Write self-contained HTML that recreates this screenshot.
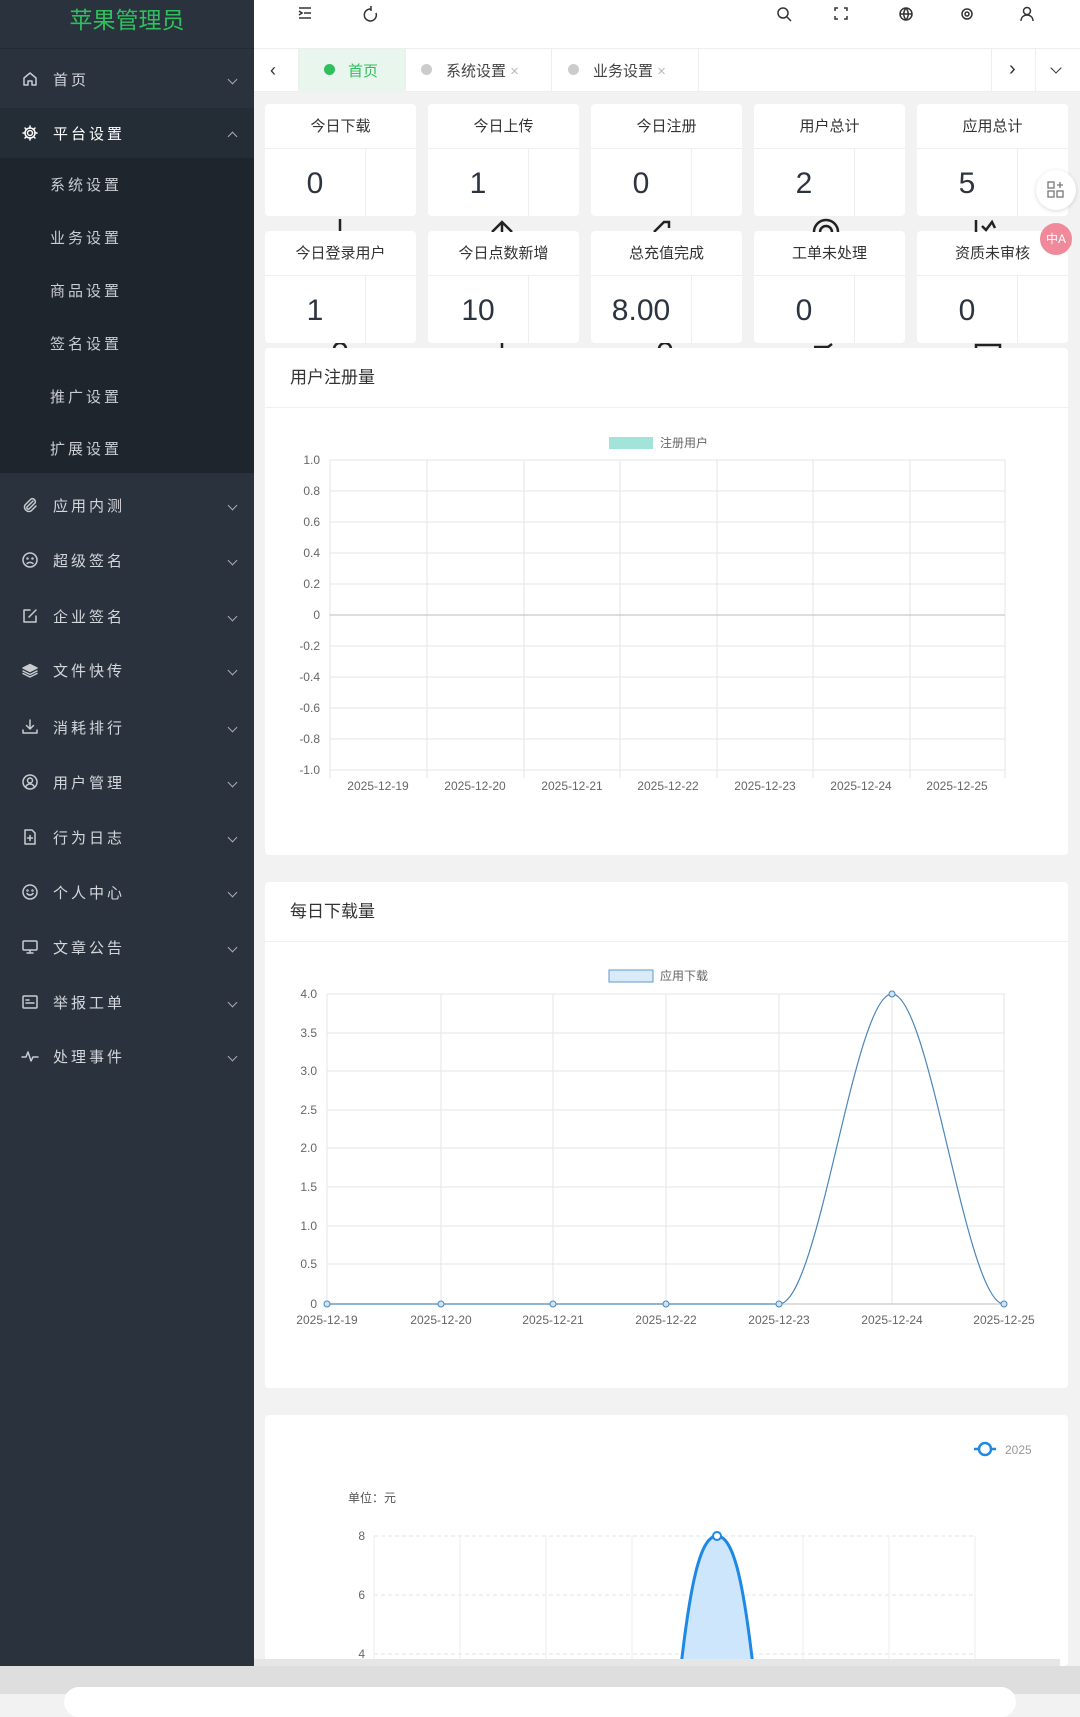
<!DOCTYPE html>
<html><head><meta charset="utf-8"><style>
*{margin:0;padding:0;box-sizing:border-box}
body{width:1080px;height:1694px;overflow:hidden;background:#f2f2f2;font-family:"Liberation Sans","Noto Sans CJK SC",sans-serif;position:relative}
.a{position:absolute}
#side{left:0;top:0;width:254px;height:1666px;background:#29323d}
.mi{position:absolute;left:0;width:254px;height:50px;color:#d4d7db;font-size:15px;letter-spacing:3px;display:flex;align-items:center}
.mi svg{position:absolute;left:21px;top:16px;width:18px;height:18px;fill:none;stroke:#c8ccd0;stroke-width:1.5;stroke-linecap:round;stroke-linejoin:round}
.mi span{position:absolute;left:53px}
.mi .ch{position:absolute;left:229px;width:7px;height:7px;border-right:1.3px solid #aab;border-bottom:1.3px solid #aab;transform:rotate(45deg)}
.sub{position:absolute;left:50px;color:#c9ccd0;font-size:15px;letter-spacing:3px}
.card{position:absolute;background:#fff;width:151px;height:112px;border-radius:4px}
.card .t{height:45px;border-bottom:1px solid #eee;text-align:center;line-height:45px;font-size:15px;color:#333}
.card .n{position:absolute;top:45px;left:0;width:101px;height:67px;border-right:1px solid #eee;text-align:center;line-height:70px;font-size:30px;color:#2c3440;font-weight:300}
.panel{position:absolute;left:265px;width:803px;background:#fff;border-radius:4px}
.panel .h{height:60px;border-bottom:1px solid #f0f0f0;padding-left:25px;line-height:60px;font-size:17px;color:#333}
.ax{font-size:12px;fill:#666;font-family:"Liberation Sans",sans-serif}
</style></head><body>
<div id="side" class="a">
 <div class="a" style="left:0;top:0;width:254px;height:49px;background:#29323d;border-bottom:1px solid #222a33;text-align:center;color:#2fbf5d;font-size:23px;line-height:40px">苹果管理员</div>
 <div class="mi" style="top:54px"><svg viewBox="0 0 18 18"><path d="M3 8l6-5 6 5v7H11v-4H7v4H3z"/></svg><span>首页</span><i class="ch"></i></div>
 <div class="a" style="top:108px;left:0;width:254px;height:50px;background:#242c36"></div>
 <div class="mi" style="top:108px;color:#fff"><svg viewBox="0 0 18 18" style="stroke:#fff"><circle cx="9" cy="9" r="2.5"/><path d="M9 2v2M9 14v2M2 9h2M14 9h2M4 4l1.5 1.5M12.5 12.5L14 14M4 14l1.5-1.5M12.5 5.5L14 4"/><circle cx="9" cy="9" r="5"/></svg><span>平台设置</span><i class="ch" style="transform:rotate(225deg);top:25px"></i></div>
 <div class="a" style="top:158px;left:0;width:254px;height:315px;background:#1e252d"></div>
 <div class="sub" style="top:174px">系统设置</div>
 <div class="sub" style="top:227px">业务设置</div>
 <div class="sub" style="top:280px">商品设置</div>
 <div class="sub" style="top:333px">签名设置</div>
 <div class="sub" style="top:386px">推广设置</div>
 <div class="sub" style="top:438px">扩展设置</div>
 <div class="mi" style="top:480px"><svg viewBox="0 0 18 18"><path d="M12 5l-6 6a1.5 1.5 0 0 0 2 2l6-6a3 3 0 0 0-4-4l-6 6a4.5 4.5 0 0 0 6 6l5-5"/></svg><span>应用内测</span><i class="ch"></i></div>
 <div class="mi" style="top:535px"><svg viewBox="0 0 18 18"><circle cx="9" cy="9" r="7"/><path d="M6 12.5c1.5-1.5 4.5-1.5 6 0"/><circle cx="6.5" cy="7.5" r=".5"/><circle cx="11.5" cy="7.5" r=".5"/></svg><span>超级签名</span><i class="ch"></i></div>
 <div class="mi" style="top:591px"><svg viewBox="0 0 18 18"><path d="M9 3H3v12h12V9"/><path d="M8 10l7-7"/></svg><span>企业签名</span><i class="ch"></i></div>
 <div class="mi" style="top:645px"><svg viewBox="0 0 18 18"><path d="M2 7l7-3.5L16 7l-7 3.5z" fill="#c8ccd0"/><path d="M2 10l7 3.5 7-3.5M2 12.5l7 3.5 7-3.5"/></svg><span>文件快传</span><i class="ch"></i></div>
 <div class="mi" style="top:702px"><svg viewBox="0 0 18 18"><path d="M9 2v9M5.5 7.5L9 11l3.5-3.5M2 12v3h14v-3"/></svg><span>消耗排行</span><i class="ch"></i></div>
 <div class="mi" style="top:757px"><svg viewBox="0 0 18 18"><circle cx="9" cy="9" r="7"/><circle cx="9" cy="7.5" r="2.5"/><path d="M4.5 14c1-2 2.5-3 4.5-3s3.5 1 4.5 3"/></svg><span>用户管理</span><i class="ch"></i></div>
 <div class="mi" style="top:812px"><svg viewBox="0 0 18 18"><path d="M4 2h7l3 3v11H4z"/><path d="M9 7.5v5M6.5 10h5"/></svg><span>行为日志</span><i class="ch"></i></div>
 <div class="mi" style="top:867px"><svg viewBox="0 0 18 18"><circle cx="9" cy="9" r="7"/><path d="M6 10.5c1.5 2 4.5 2 6 0"/><circle cx="6.5" cy="7.5" r=".5"/><circle cx="11.5" cy="7.5" r=".5"/></svg><span>个人中心</span><i class="ch"></i></div>
 <div class="mi" style="top:922px"><svg viewBox="0 0 18 18"><rect x="2" y="3" width="14" height="9" rx="1"/><path d="M9 12v3M6 15h6"/></svg><span>文章公告</span><i class="ch"></i></div>
 <div class="mi" style="top:977px"><svg viewBox="0 0 18 18"><rect x="2" y="3" width="14" height="12" rx="1"/><path d="M5 7h3M5 10h8"/></svg><span>举报工单</span><i class="ch"></i></div>
 <div class="mi" style="top:1031px"><svg viewBox="0 0 18 18"><path d="M1 10h4l2-5 3 9 2-4h5"/></svg><span>处理事件</span><i class="ch"></i></div>
</div>
<!-- header -->
<div class="a" style="left:254px;top:0;width:826px;height:49px;background:#fff;border-bottom:1px solid #eee"></div>
<svg class="a" style="left:254px;top:0" width="826" height="49" fill="none" stroke="#333" stroke-width="1.5">
 <path d="M45 8h12M50 13h7M45 18h12M45 11l3 2-3 2"/>
 <path d="M117 9a6 6 0 1 0 5 4M117 6v5"/>
 <circle cx="529" cy="13" r="5"/><path d="M533 17l4 4"/>
 <path d="M584 8h-3v3M590 8h3v3M584 19h-3v-3M590 19h3v-3"/>
 <circle cx="652" cy="14" r="6"/><path d="M646 14h12M652 8c-3 4-3 8 0 12M652 8c3 4 3 8 0 12"/>
 <circle cx="713" cy="14" r="5"/><circle cx="713" cy="14" r="2"/>
 <circle cx="773" cy="11" r="3.5"/><path d="M767 21c0-4 3-6 6-6s6 2 6 6"/>
</svg>
<!-- tabs -->
<div class="a" style="left:254px;top:49px;width:826px;height:43px;background:#fff;border-bottom:1px solid #eee"></div>
<div class="a" style="left:270px;top:60px;font-size:18px;color:#333">‹</div>
<div class="a" style="left:298px;top:49px;width:107px;height:43px;background:#e9f6ee;border-left:1px solid #eee"></div>
<div class="a" style="left:324px;top:64px;width:11px;height:11px;border-radius:50%;background:#2fbf5d"></div>
<div class="a" style="left:348px;top:60px;font-size:15px;color:#2fbf5d">首页</div>
<div class="a" style="left:405px;top:49px;width:147px;height:43px;border-left:1px solid #eee;border-right:1px solid #eee"></div>
<div class="a" style="left:421px;top:64px;width:11px;height:11px;border-radius:50%;background:#ccc"></div>
<div class="a" style="left:446px;top:60px;font-size:15px;color:#444">系统设置 <span style="color:#bbb">×</span></div>
<div class="a" style="left:552px;top:49px;width:147px;height:43px;border-right:1px solid #eee"></div>
<div class="a" style="left:568px;top:64px;width:11px;height:11px;border-radius:50%;background:#ccc"></div>
<div class="a" style="left:593px;top:60px;font-size:15px;color:#444">业务设置 <span style="color:#bbb">×</span></div>
<div class="a" style="left:991px;top:49px;width:1px;height:43px;background:#eee"></div>
<div class="a" style="left:1035px;top:49px;width:1px;height:43px;background:#eee"></div>
<div class="a" style="left:1009px;top:58px;font-size:20px;color:#333">›</div>
<div class="a" style="left:1052px;top:64px;width:8px;height:8px;border-right:1.3px solid #333;border-bottom:1.3px solid #333;transform:rotate(45deg)"></div>
<!-- cards -->
<div class="card" style="left:265px;top:104px"><div class="t">今日下载</div><div class="n">0</div></div>
<div class="card" style="left:428px;top:104px"><div class="t">今日上传</div><div class="n">1</div></div>
<div class="card" style="left:591px;top:104px"><div class="t">今日注册</div><div class="n">0</div></div>
<div class="card" style="left:754px;top:104px"><div class="t">用户总计</div><div class="n">2</div></div>
<div class="card" style="left:917px;top:104px"><div class="t">应用总计</div><div class="n">5</div></div>
<div class="card" style="left:265px;top:231px"><div class="t">今日登录用户</div><div class="n">1</div></div>
<div class="card" style="left:428px;top:231px"><div class="t">今日点数新增</div><div class="n">10</div></div>
<div class="card" style="left:591px;top:231px"><div class="t">总充值完成</div><div class="n">8.00</div></div>
<div class="card" style="left:754px;top:231px"><div class="t">工单未处理</div><div class="n">0</div></div>
<div class="card" style="left:917px;top:231px"><div class="t">资质未审核</div><div class="n">0</div></div>
<svg class="a" style="left:254px;top:216px" width="826" height="16" fill="none" stroke="#222" stroke-width="2.5">
 <path d="M86 3v12"/><path d="M238 16l10-10 10 10M248 6v10"/><path d="M400 16l10-10h5v6"/><path d="M560 16a12 12 0 0 1 24 0M566 16a6 6 0 0 1 12 0"/><path d="M722 4v12M728 10l4 4 6-8 3 6"/>
</svg>
<svg class="a" style="left:254px;top:343px" width="826" height="6" fill="none" stroke="#222" stroke-width="2.5">
 <path d="M80 6a6 6 0 0 1 12 0"/><path d="M248 0v6"/><path d="M405 6a6 6 0 0 1 12 0"/><path d="M560 4h14l4-3"/><path d="M722 5v-3h24v3"/>
</svg>
<!-- floating buttons -->
<div class="a" style="left:1036px;top:170px;width:40px;height:40px;border-radius:50%;background:#fff;box-shadow:0 1px 4px rgba(0,0,0,.15)"></div>
<svg class="a" style="left:1047px;top:181px" width="18" height="18" fill="none" stroke="#777" stroke-width="1.3"><rect x="1" y="1" width="6" height="6"/><rect x="1" y="10" width="6" height="6"/><rect x="10" y="10" width="6" height="6"/><path d="M13 1v6M10 4h6"/></svg>
<div class="a" style="left:1040px;top:223px;width:32px;height:32px;border-radius:50%;background:#f08a9a;color:#fff;font-size:12px;text-align:center;line-height:32px">中A</div>
<!-- chart 1 -->
<div class="panel" style="top:348px;height:507px"><div class="h">用户注册量</div></div>
<svg class="a" style="left:254px;top:348px" width="826" height="507">
 <rect x="355" y="89" width="44" height="12" fill="#a3e4da"/><text x="406" y="99" class="ax">注册用户</text>
 <g stroke="#e6e6e6">
 <path d="M76 112H751M76 143H751M76 174H751M76 205H751M76 236H751M76 298H751M76 329H751M76 360H751M76 391H751M76 422H751"/>
 <path d="M76 112V430M173 112V430M270 112V430M366 112V430M463 112V430M559 112V430M656 112V430M751 112V430"/>
 </g>
 <path d="M76 267H751" stroke="#bbb"/>
 <g class="ax" text-anchor="end">
 <text x="66" y="116">1.0</text><text x="66" y="147">0.8</text><text x="66" y="178">0.6</text><text x="66" y="209">0.4</text><text x="66" y="240">0.2</text><text x="66" y="271">0</text><text x="66" y="302">-0.2</text><text x="66" y="333">-0.4</text><text x="66" y="364">-0.6</text><text x="66" y="395">-0.8</text><text x="66" y="426">-1.0</text>
 </g>
 <g class="ax" text-anchor="middle">
 <text x="124" y="442">2025-12-19</text><text x="221" y="442">2025-12-20</text><text x="318" y="442">2025-12-21</text><text x="414" y="442">2025-12-22</text><text x="511" y="442">2025-12-23</text><text x="607" y="442">2025-12-24</text><text x="703" y="442">2025-12-25</text>
 </g>
</svg>
<!-- chart 2 -->
<div class="panel" style="top:882px;height:506px"><div class="h">每日下载量</div></div>
<svg class="a" style="left:254px;top:882px" width="826" height="506">
 <rect x="355" y="88" width="44" height="12" fill="#dbeaf7" stroke="#5b9bd5"/><text x="406" y="98" class="ax">应用下载</text>
 <g stroke="#e6e6e6">
 <path d="M73 112H751M73 151H751M73 189H751M73 228H751M73 266H751M73 305H751M73 344H751M73 382H751"/>
 <path d="M73 112V422M187 112V422M299 112V422M412 112V422M525 112V422M638 112V422M750 112V422"/>
 </g>
 <path d="M73 422H751" stroke="#bbb"/>
 <g class="ax" text-anchor="end">
 <text x="63" y="116">4.0</text><text x="63" y="155">3.5</text><text x="63" y="193">3.0</text><text x="63" y="232">2.5</text><text x="63" y="270">2.0</text><text x="63" y="309">1.5</text><text x="63" y="348">1.0</text><text x="63" y="386">0.5</text><text x="63" y="426">0</text>
 </g>
 <g class="ax" text-anchor="middle">
 <text x="73" y="442">2025-12-19</text><text x="187" y="442">2025-12-20</text><text x="299" y="442">2025-12-21</text><text x="412" y="442">2025-12-22</text><text x="525" y="442">2025-12-23</text><text x="638" y="442">2025-12-24</text><text x="750" y="442">2025-12-25</text>
 </g>
 <path d="M73 422H525C565 422 600 112 638 112C676 112 712 422 750 422" fill="none" stroke="#4a86b8" stroke-width="1.2"/>
 <g fill="#cfe3f5" stroke="#4a86b8"><circle cx="73" cy="422" r="3"/><circle cx="187" cy="422" r="3"/><circle cx="299" cy="422" r="3"/><circle cx="412" cy="422" r="3"/><circle cx="525" cy="422" r="3"/><circle cx="638" cy="112" r="3"/><circle cx="750" cy="422" r="3"/></g>
</svg>
<!-- chart 3 -->
<div class="panel" style="top:1415px;height:251px"></div>
<svg class="a" style="left:254px;top:1415px" width="826" height="251">
 <path d="M720 34h22" stroke="#1e88e5" stroke-width="2.5"/><circle cx="731" cy="34" r="6" fill="#fff" stroke="#1e88e5" stroke-width="2.5"/>
 <text x="751" y="39" class="ax" style="fill:#999">2025</text>
 <text x="94" y="87" class="ax" style="fill:#555">单位：元</text>
 <g stroke="#e3e3e3" stroke-dasharray="4 3"><path d="M120 121H721M120 180H721M120 239H721"/></g>
 <g stroke="#eee"><path d="M120 121V251M206 121V251M292 121V251M378 121V251M463 121V251M549 121V251M635 121V251M721 121V251"/></g>
 <g class="ax" text-anchor="end"><text x="111" y="125">8</text><text x="111" y="184">6</text><text x="111" y="243">4</text></g>
 <path d="M426 260C436 170 446 121 463 121C480 121 490 170 500 260Z" fill="#cde6fb"/>
 <path d="M426 260C436 170 446 121 463 121C480 121 490 170 500 260" fill="none" stroke="#1e88e5" stroke-width="3"/>
 <circle cx="463" cy="121" r="4" fill="#fff" stroke="#1e88e5" stroke-width="2"/>
</svg>
<!-- bottom bar -->
<div class="a" style="left:0;top:1666px;width:1080px;height:28px;background:#dedede"></div>
<div class="a" style="left:254px;top:1659px;width:806px;height:7px;background:#e6e6e6"></div>
<div class="a" style="left:64px;top:1687px;width:952px;height:30px;background:#fff;border-radius:18px"></div>
</body></html>
